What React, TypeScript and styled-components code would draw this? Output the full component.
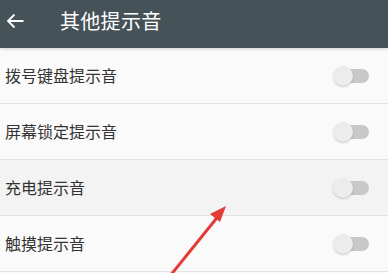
import React from 'react';
import styled, { createGlobalStyle } from 'styled-components';

const GlobalStyle = createGlobalStyle`
  html, body {
    margin: 0;
    padding: 0;
    background: #fafafa;
    font-family: "Noto Sans CJK SC", "Noto Sans", sans-serif;
  }
`;

const Screen = styled.div`
  position: relative;
  width: 388px;
  height: 273px;
  overflow: hidden;
  background: #fafafa;
`;

const Toolbar = styled.div`
  display: flex;
  align-items: center;
  height: 48px;
  padding-left: 6px;
  background: #455258;
  color: #fff;
  box-shadow: 0 1px 3px rgba(0, 0, 0, 0.18);
  position: relative;
  z-index: 1;
`;

const BackButton = styled.div`
  display: flex;
  align-items: center;
  width: 18px;
  height: 18px;
  margin-top: -6px;
`;

const Title = styled.span`
  margin-left: 36px;
  margin-top: -7px;
  font-size: 20px;
  letter-spacing: 0.3px;
`;

const List = styled.div`
  display: flex;
  flex-direction: column;
`;

const Row = styled.div<{ $pressed?: boolean }>`
  display: flex;
  align-items: center;
  justify-content: space-between;
  height: 55px;
  padding: 0 19px 0 5px;
  background: ${(p) => (p.$pressed ? '#f3f3f3' : '#fafafa')};
  border-bottom: 1px solid #e2e2e2;
`;

const Label = styled.span`
  font-size: 16px;
  color: #333;
  margin-top: -2px;
`;

const Switch = styled.div`
  position: relative;
  width: 36px;
  height: 20px;
`;

const Track = styled.div`
  position: absolute;
  left: 4px;
  right: 0;
  top: 3px;
  height: 14px;
  border-radius: 7px;
  background: #c8c8c8;
`;

const Thumb = styled.div`
  position: absolute;
  left: 0;
  top: 0;
  width: 20px;
  height: 20px;
  border-radius: 50%;
  background: #ececec;
  box-shadow: 0 1px 2px rgba(0, 0, 0, 0.2);
`;

const Pointer = styled.svg`
  position: absolute;
  left: 0;
  top: 0;
  pointer-events: none;
`;

const items = ['拨号键盘提示音', '屏幕锁定提示音', '充电提示音', '触摸提示音'];

export default function App() {
  return (
    <Screen>
      <GlobalStyle />
      <Toolbar>
        <BackButton>
          <svg width="18" height="18" viewBox="0 0 18 18">
            <path d="M17.5 9H2.5M8.5 2.5L2 9l6.5 6.5" fill="none" stroke="#fff" strokeWidth="1.8" />
          </svg>
        </BackButton>
        <Title>其他提示音</Title>
      </Toolbar>
      <List>
        {items.map((t, i) => (
          <Row key={t} $pressed={i === 2}>
            <Label>{t}</Label>
            <Switch>
              <Track />
              <Thumb />
            </Switch>
          </Row>
        ))}
      </List>
      <Pointer width="388" height="273" viewBox="0 0 388 273">
        <line x1="170" y1="276" x2="220" y2="214" stroke="#e33b36" strokeWidth="3" />
        <polygon points="226,206 210,214 220,222" fill="#e33b36" />
      </Pointer>
    </Screen>
  );
}
